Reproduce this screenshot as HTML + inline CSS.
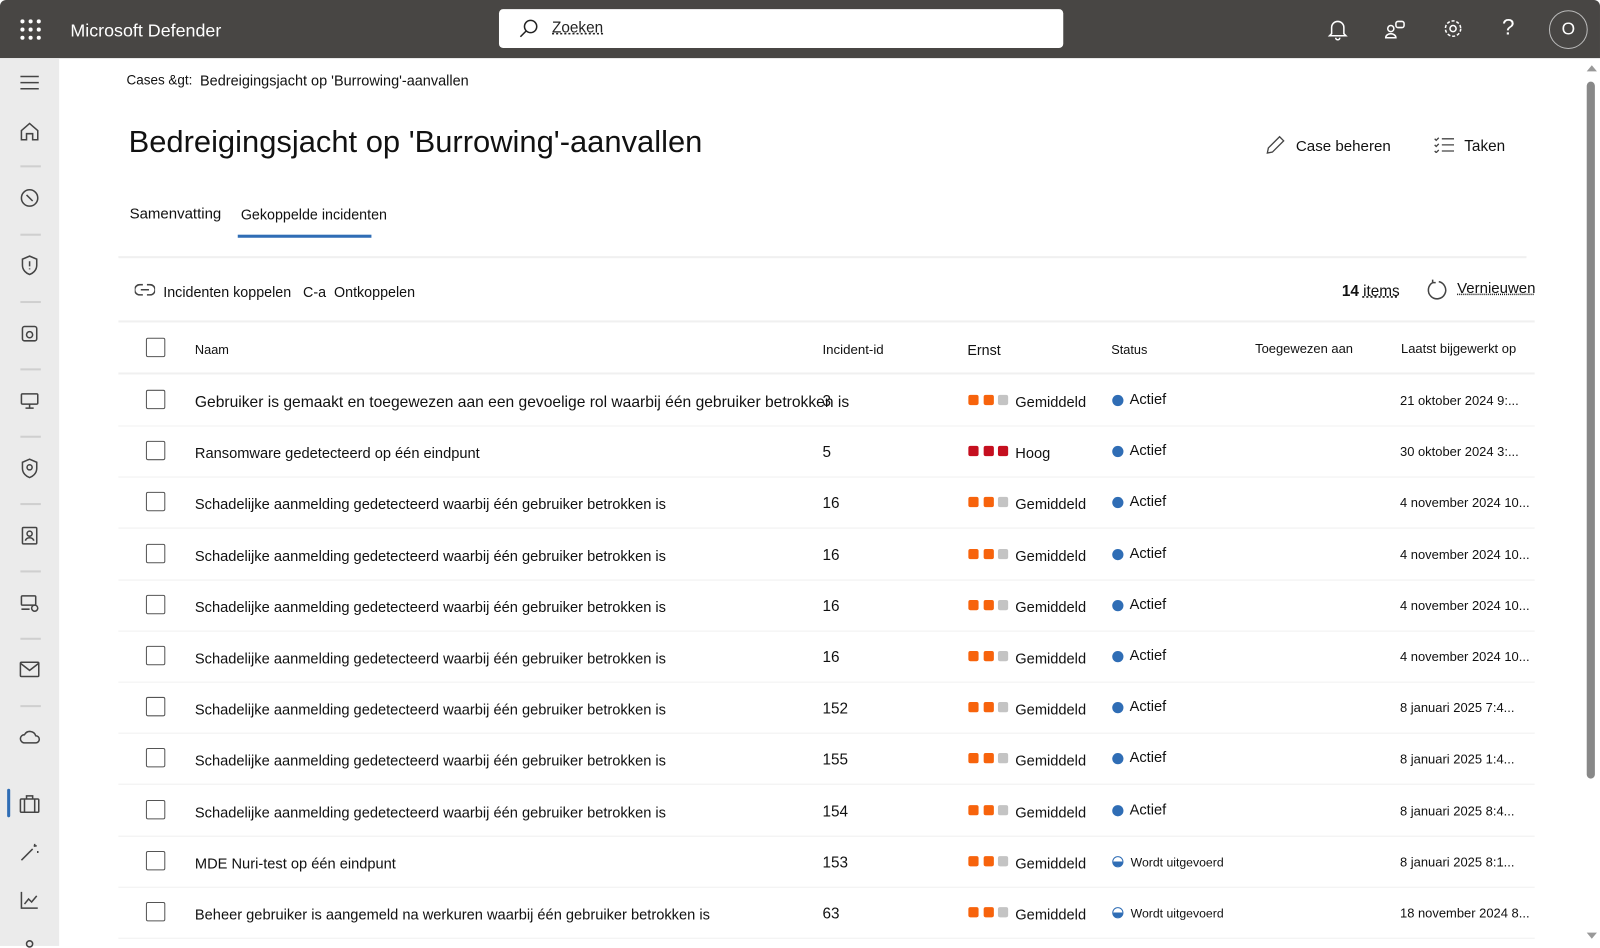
<!DOCTYPE html>
<html><head><meta charset="utf-8">
<style>
*{margin:0;padding:0;box-sizing:border-box}
body{width:1600px;height:946px;overflow:hidden;background:#fff;font-family:"Liberation Sans",Arial,sans-serif;color:#111;position:relative}
#wrap{position:absolute;left:0;top:0;width:1568px;height:927px;transform:scale(1.0204);transform-origin:0 0}
.top{position:absolute;left:0;top:0;width:1568px;height:57px;background:#484644;border-radius:6px 6px 0 0}
.waffle{position:absolute;left:20px;top:19px;width:20px;height:20px}
.waffle i{position:absolute;width:4px;height:4px;border-radius:50%;background:#fff}
.brand{position:absolute;left:69px;top:20px;color:#fff;font-size:17.5px}
.search{position:absolute;left:489px;top:9px;width:553px;height:38px;background:#fff;border-radius:4px}
.search span{position:absolute;left:52px;top:10px;font-size:15px;color:#222;text-decoration:underline dotted}
.side{position:absolute;left:0;top:57px;width:58px;height:870px;background:#ebebeb}
.side .sep{position:absolute;left:20px;width:20px;height:2px;background:#cfcfcf}
.side svg{position:absolute;left:19px}
.t{position:absolute;white-space:nowrap}
.hr{position:absolute;height:2px;background:#f0f0f0}
.cb{position:absolute;left:143px;width:19px;height:19px;border:1.5px solid #555;border-radius:2px;background:#fff}
.sq{position:absolute;width:10px;height:10px;border-radius:2px}
.dot{position:absolute;width:11px;height:11px;border-radius:50%;background:#2f6db5}
.row{font-size:14.35px}
</style></head><body>
<div id="wrap">
<div class="top">
 <div class="waffle">
  <i style="left:0;top:0"></i><i style="left:8px;top:0"></i><i style="left:16px;top:0"></i>
  <i style="left:0;top:8px"></i><i style="left:8px;top:8px"></i><i style="left:16px;top:8px"></i>
  <i style="left:0;top:16px"></i><i style="left:8px;top:16px"></i><i style="left:16px;top:16px"></i>
 </div>
 <div class="brand">Microsoft Defender</div>
 <div class="search">
  <svg style="position:absolute;left:19px;top:9px" width="20" height="20" viewBox="0 0 20 20" fill="none" stroke="#222" stroke-width="1.5"><circle cx="12" cy="8" r="6"/><path d="M7.5 12.5L2 18"/></svg>
  <span>Zoeken</span>
 </div>
 <svg style="position:absolute;left:1301px;top:18px" width="20" height="22" viewBox="0 0 20 22" fill="none" stroke="#fff" stroke-width="1.5"><path d="M4 15V9a6 6 0 0112 0v6l2 2H2z"/><path d="M8 19a2 2 0 004 0"/></svg>
 <svg style="position:absolute;left:1357px;top:18px" width="22" height="22" viewBox="0 0 22 22" fill="none" stroke="#fff" stroke-width="1.5"><circle cx="6" cy="10" r="3"/><path d="M1 19a5 4 0 0110 0z"/><rect x="11" y="3" width="8" height="6" rx="2"/></svg>
 <svg style="position:absolute;left:1413px;top:17px" width="22" height="22" viewBox="0 0 22 22" fill="none" stroke="#fff" stroke-width="1.5"><circle cx="11" cy="11" r="3"/><circle cx="11" cy="11" r="7.5" stroke-dasharray="3 1.8"/></svg>
 <div class="t" style="left:1472px;top:14px;color:#fff;font-size:22px">?</div>
 <div style="position:absolute;left:1518px;top:10px;width:38px;height:38px;border:1px solid #bbb;border-radius:50%;color:#fff;font-size:17px;text-align:center;line-height:36px">O</div>
</div>
<div class="side">
 <svg style="top:16px" width="20" height="16" viewBox="0 0 20 16" stroke="#444" stroke-width="1.5"><path d="M1 2h18M1 8h18M1 14h18"/></svg>
 <svg style="top:62px" width="20" height="20" viewBox="0 0 20 20" fill="none" stroke="#444" stroke-width="1.5"><path d="M2 9l8-7 8 7v9h-5v-6H7v6H2z"/></svg>
 <div class="sep" style="top:105px"></div>
 <svg style="top:127px" width="20" height="20" viewBox="0 0 20 20" fill="none" stroke="#444" stroke-width="1.5"><circle cx="10" cy="10" r="8"/><path d="M7 7l6 6"/></svg>
 <div class="sep" style="top:172px"></div>
 <svg style="top:192px" width="20" height="22" viewBox="0 0 20 22" fill="none" stroke="#444" stroke-width="1.5"><path d="M10 2l7 3v6c0 5-4 8-7 9-3-1-7-4-7-9V5z"/><path d="M10 7v5M10 14v1"/></svg>
 <div class="sep" style="top:238px"></div>
 <svg style="top:260px" width="20" height="20" viewBox="0 0 20 20" fill="none" stroke="#444" stroke-width="1.5"><rect x="3" y="3" width="14" height="14" rx="2"/><circle cx="10" cy="11" r="3"/></svg>
 <div class="sep" style="top:304px"></div>
 <svg style="top:326px" width="20" height="20" viewBox="0 0 20 20" fill="none" stroke="#444" stroke-width="1.5"><rect x="2" y="3" width="16" height="10" rx="1"/><path d="M6 17h8M10 13v4"/></svg>
 <div class="sep" style="top:370px"></div>
 <svg style="top:391px" width="20" height="22" viewBox="0 0 20 22" fill="none" stroke="#444" stroke-width="1.5"><path d="M10 2l7 3v6c0 5-4 8-7 9-3-1-7-4-7-9V5z"/><circle cx="10" cy="10" r="2.5"/></svg>
 <div class="sep" style="top:436px"></div>
 <svg style="top:458px" width="20" height="20" viewBox="0 0 20 20" fill="none" stroke="#444" stroke-width="1.5"><rect x="3" y="2" width="14" height="16" rx="1"/><circle cx="10" cy="8" r="2.5"/><path d="M6 15a4 3 0 018 0"/></svg>
 <div class="sep" style="top:502px"></div>
 <svg style="top:524px" width="20" height="20" viewBox="0 0 20 20" fill="none" stroke="#444" stroke-width="1.5"><rect x="2" y="3" width="14" height="9" rx="1"/><path d="M2 16h8"/><circle cx="15" cy="15" r="3"/></svg>
 <div class="sep" style="top:568px"></div>
 <svg style="top:591px" width="20" height="16" viewBox="0 0 20 16" fill="none" stroke="#444" stroke-width="1.5"><rect x="1" y="1" width="18" height="14" rx="1"/><path d="M1 2l9 7 9-7"/></svg>
 <div class="sep" style="top:634px"></div>
 <svg style="top:657px" width="22" height="16" viewBox="0 0 22 16" fill="none" stroke="#444" stroke-width="1.5"><path d="M5 14a4 4 0 010-8 6 6 0 0111 1 3.5 3.5 0 010 7z"/></svg>
 <div style="position:absolute;left:7px;top:716px;width:3px;height:28px;background:#2f6db5;border-radius:2px"></div>
 <svg style="top:722px" width="20" height="18" viewBox="0 0 20 18" fill="none" stroke="#444" stroke-width="1.5"><rect x="1" y="4" width="18" height="13" rx="1"/><path d="M7 4V1h6v3M5 4v13M15 4v13"/></svg>
 <svg style="top:768px" width="20" height="20" viewBox="0 0 20 20" fill="none" stroke="#444" stroke-width="1.5"><path d="M2 18L13 7M15 2v3M17 4h-3M18 9v2"/></svg>
 <svg style="top:815px" width="20" height="20" viewBox="0 0 20 20" fill="none" stroke="#444" stroke-width="1.5"><path d="M2 2v16h16M5 14l4-5 3 3 5-6"/></svg>
 <svg style="top:862px" width="20" height="10" viewBox="0 0 20 10" fill="none" stroke="#444" stroke-width="1.5"><circle cx="10" cy="6" r="3"/></svg>
</div>
<div style="position:absolute;left:1555px;top:64px;width:0;height:0;border-left:5px solid transparent;border-right:5px solid transparent;border-bottom:6px solid #999"></div>
<div style="position:absolute;left:1555px;top:80px;width:8px;height:683px;background:#888;border-radius:4px"></div>
<div style="position:absolute;left:1555px;top:914px;width:0;height:0;border-left:5px solid transparent;border-right:5px solid transparent;border-top:6px solid #999"></div>

<div class="t" style="left:124px;top:71px;font-size:13.2px">Cases &amp;gt:</div>
<div class="t" style="left:196px;top:72px;font-size:14.2px">Bedreigingsjacht op 'Burrowing'-aanvallen</div>
<div class="t" style="left:126px;top:123px;font-size:30.3px">Bedreigingsjacht op 'Burrowing'-aanvallen</div>
<svg style="position:absolute;left:1240px;top:132px" width="20" height="20" viewBox="0 0 20 20" fill="none" stroke="#444" stroke-width="1.3"><path d="M2 18l1-5L14 2l4 4L7 17z"/></svg>
<div class="t" style="left:1270px;top:136px;font-size:14.8px">Case beheren</div>
<svg style="position:absolute;left:1405px;top:134px" width="20" height="16" viewBox="0 0 20 16" fill="none" stroke="#444" stroke-width="1.3"><path d="M1 2l1.5 1.5L5 1M1 8l1.5 1.5L5 7M1 14l1.5 1.5L5 13M8 2h12M8 8h12M8 14h12"/></svg>
<div class="t" style="left:1435px;top:135px;font-size:15px">Taken</div>

<div class="t" style="left:127px;top:202px;font-size:14.7px">Samenvatting</div>
<div class="t" style="left:236px;top:202px;font-size:14px">Gekoppelde incidenten</div>
<div style="position:absolute;left:233px;top:230px;width:131px;height:3px;background:#2f6db5"></div>
<div class="hr" style="left:116px;top:251px;width:1380px"></div>

<svg style="position:absolute;left:132px;top:278px" width="20" height="12" viewBox="0 0 20 12" fill="none" stroke="#444" stroke-width="1.5"><path d="M8 1H5a5 5 0 000 10h3M12 1h3a5 5 0 010 10h-3M6 6h8"/></svg>
<div class="t" style="left:160px;top:278px;font-size:14px">Incidenten koppelen</div>
<div class="t" style="left:297px;top:278px;font-size:14px">C-a&nbsp; Ontkoppelen</div>
<div class="t" style="left:1315px;top:277px;font-size:15px"><b>14</b> <span style="text-decoration:underline dotted">items</span></div>
<svg style="position:absolute;left:1397px;top:273px" width="22" height="22" viewBox="0 0 22 22" fill="none" stroke="#444" stroke-width="1.5"><path d="M7 4a8.5 8.5 0 1 0 6-1"/><path d="M7 4V1M7 4h3"/></svg>
<div class="t" style="left:1428px;top:275px;font-size:14.7px;text-decoration:underline dotted">Vernieuwen</div>

<div class="hr" style="left:116px;top:314px;width:1388px"></div>
<div class="cb" style="top:331px"></div>
<div class="t" style="left:191px;top:336px;font-size:12.5px">Naam</div>
<div class="t" style="left:806px;top:335px;font-size:13px">Incident-id</div>
<div class="t" style="left:948px;top:335px;font-size:14px">Ernst</div>
<div class="t" style="left:1089px;top:336px;font-size:12.5px">Status</div>
<div class="t" style="left:1230px;top:335px;font-size:12.7px">Toegewezen aan</div>
<div class="t" style="left:1373px;top:335px;font-size:12.7px">Laatst bijgewerkt op</div>
<div class="hr" style="left:116px;top:365px;width:1388px"></div>

<div id="rows"></div>
</div>
<script>
var d=[
["Gebruiker is gemaakt en toegewezen aan een gevoelige rol waarbij één gebruiker betrokken is","3","m","Actief","21 oktober 2024 9:..."],
["Ransomware gedetecteerd op één eindpunt","5","h","Actief","30 oktober 2024 3:..."],
["Schadelijke aanmelding gedetecteerd waarbij één gebruiker betrokken is","16","m","Actief","4 november 2024 10..."],
["Schadelijke aanmelding gedetecteerd waarbij één gebruiker betrokken is","16","m","Actief","4 november 2024 10..."],
["Schadelijke aanmelding gedetecteerd waarbij één gebruiker betrokken is","16","m","Actief","4 november 2024 10..."],
["Schadelijke aanmelding gedetecteerd waarbij één gebruiker betrokken is","16","m","Actief","4 november 2024 10..."],
["Schadelijke aanmelding gedetecteerd waarbij één gebruiker betrokken is","152","m","Actief","8 januari 2025 7:4..."],
["Schadelijke aanmelding gedetecteerd waarbij één gebruiker betrokken is","155","m","Actief","8 januari 2025 1:4..."],
["Schadelijke aanmelding gedetecteerd waarbij één gebruiker betrokken is","154","m","Actief","8 januari 2025 8:4..."],
["MDE Nuri-test op één eindpunt","153","m","W","8 januari 2025 8:1..."],
["Beheer gebruiker is aangemeld na werkuren waarbij één gebruiker betrokken is","63","m","W","18 november 2024 8..."]];
var h="";
d.forEach(function(r,i){
 var c=393+i*50.2;var y=Math.round(c);
 h+='<div class="cb" style="top:'+(y-11)+'px"></div>';
 var st=i==0?'font-size:15.3px;top:'+(y-7)+'px':'top:'+(y-6)+'px';
 h+='<div class="t row" style="left:191px;'+st+'">'+r[0]+'</div>';
 h+='<div class="t row" style="left:806px;top:'+(y-8)+'px;font-size:15px">'+r[1]+'</div>';
 var cols=r[2]=="h"?["#c50f1f","#c50f1f","#c50f1f"]:["#f7630c","#f7630c","#c4c4c4"];
 for(var k=0;k<3;k++)h+='<div class="sq" style="left:'+(949+k*14.5)+'px;top:'+(y-6)+'px;background:'+cols[k]+'"></div>';
 h+='<div class="t row" style="left:995px;top:'+(y-6)+'px">'+(r[2]=="h"?"Hoog":"Gemiddeld")+'</div>';
 if(r[3]=="Actief"){h+='<div class="dot" style="left:1090px;top:'+(y-6)+'px"></div><div class="t row" style="left:1107px;top:'+(y-9)+'px">Actief</div>';}
 else{h+='<div class="dot" style="left:1090px;top:'+(y-6)+'px;background:linear-gradient(#fff 45%,#2f6db5 45%);border:1px solid #2f6db5"></div><div class="t" style="left:1108px;top:'+(y-7)+'px;font-size:12px">Wordt uitgevoerd</div>';}
 h+='<div class="t" style="left:1372px;top:'+(y-7)+'px;font-size:12.7px">'+r[4]+'</div>';
 h+='<div class="hr" style="left:116px;top:'+Math.round(c+24)+'px;width:1388px;height:1px"></div>';
});
document.getElementById("rows").innerHTML=h;
</script>
</body></html>
